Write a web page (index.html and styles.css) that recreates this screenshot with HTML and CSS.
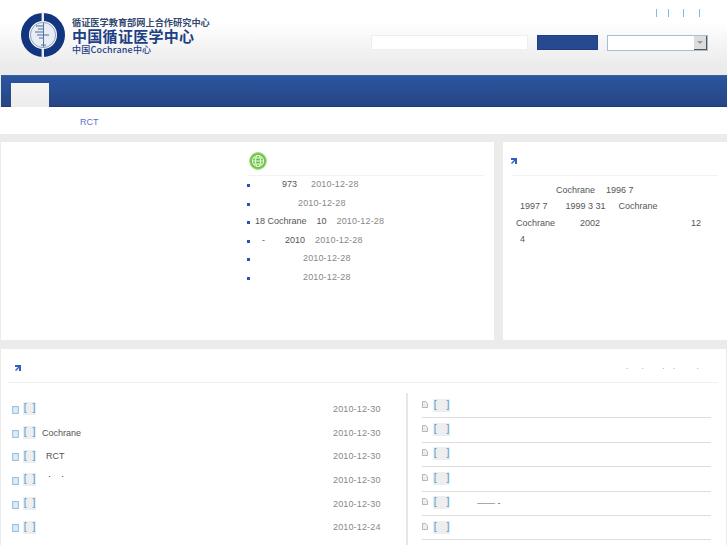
FILE: index.html
```html
<!DOCTYPE html>
<html lang="zh-CN">
<head>
<meta charset="utf-8">
<title>中国循证医学中心</title>
<link rel="stylesheet" href="styles.css">
</head>
<body>
<header class="top">
  <div class="brand">
    <svg class="logo" width="46" height="46" viewBox="0 0 46 46" aria-hidden="true">
      <circle cx="23" cy="23" r="18" fill="none" stroke="#12357f" stroke-width="8"/>
      <rect x="21.6" y="0" width="2.4" height="46" fill="#e9eef5"/>
      <circle cx="23" cy="23" r="12.6" fill="#e8edf4" stroke="#8fa3c4" stroke-width="1"/>
      <path d="M23.5 11v24" stroke="#5b739f" stroke-width="1"/>
      <path d="M16 14h7M18 17h5M15 20h8M17 23h12M19 26h4M21 33h5" stroke="#4f6a9b" stroke-width="1"/>
    </svg>
    <div class="brand-text">
      <div class="brand-a">循证医学教育部网上合作研究中心</div>
      <div class="brand-b">中国循证医学中心</div>
      <div class="brand-c">中国Cochrane中心</div>
    </div>
  </div>
  <div class="tools">
    <div class="links"><i class="sep"></i><i class="sep s2"></i><i class="sep s3"></i><i class="sep s4"></i></div>
    <div class="search">
      <div class="search-input"></div>
      <div class="search-btn"></div>
      <div class="select"><span class="select-arrow"></span></div>
    </div>
  </div>
</header>

<nav class="nav"><div class="tab"></div></nav>
<div class="subnav"><a class="subnav-link">RCT</a></div>

<main>
  <div class="cols">
    <section class="panel news-panel">
      <div class="news-head">
        <svg width="18" height="18" viewBox="0 0 18 18" aria-hidden="true">
          <circle cx="9" cy="9" r="8.4" fill="#6cc644" stroke="#a6dc8a" stroke-width="1"/>
          <circle cx="9" cy="9" r="5.6" fill="none" stroke="#eaf8e0" stroke-width="1"/>
          <ellipse cx="9" cy="9" rx="2.6" ry="5.6" fill="none" stroke="#eaf8e0" stroke-width="1"/>
          <path d="M3.4 9h11.2M4.4 6h9.2M4.4 12h9.2" stroke="#eaf8e0" stroke-width="1"/>
        </svg>
      </div>
      <ul class="news">
        <li><span class="m27">973</span><span class="date m14">2010-12-28</span></li>
        <li><span class="date m43">2010-12-28</span></li>
        <li><span>18 Cochrane</span><span class="m10">10</span><span class="date m10">2010-12-28</span></li>
        <li><span class="m7">-</span><span class="m20">2010</span><span class="date m10">2010-12-28</span></li>
        <li><span class="date m48">2010-12-28</span></li>
        <li><span class="date m48">2010-12-28</span></li>
      </ul>
    </section>
    <section class="panel intro-panel">
      <div class="panel-head"><svg class="arrow" width="6" height="6" viewBox="0 0 6 6" aria-hidden="true"><path d="M0 0h6v6H4V3L1 6 0 5l3-3H0z" fill="#2f5fc0"/></svg></div>
      <div class="intro">
        <p class="l1">Cochrane<span class="m11">1996 7</span></p>
        <p class="l2">1997 7<span class="m18">1999 3 31</span><span class="m13">Cochrane</span></p>
        <p class="l3">Cochrane<span class="m25">2002</span><span class="m91">12</span></p>
        <p class="l4">4</p>
      </div>
    </section>
  </div>

  <section class="panel bottom">
    <div class="bottom-head">
      <svg class="arrow" width="6" height="6" viewBox="0 0 6 6" aria-hidden="true"><path d="M0 0h6v6H4V3L1 6 0 5l3-3H0z" fill="#2f5fc0"/></svg>
      <div class="dots"><b>·</b><b class="g15">·</b><b class="g20">·</b><b class="g12">·</b><b class="g24">·</b></div>
    </div>
    <div class="bottom-cols">
      <ul class="recent">
        <li><svg class="doc-blue" viewBox="0 0 6 7"><rect x=".5" y=".5" width="5" height="6" fill="#dcecf8" stroke="#9dc3e2"/></svg><span class="tag">[ ]</span><span class="name"></span><span class="date">2010-12-30</span></li>
        <li><svg class="doc-blue" viewBox="0 0 6 7"><rect x=".5" y=".5" width="5" height="6" fill="#dcecf8" stroke="#9dc3e2"/></svg><span class="tag">[ ]</span><span class="name n1">Cochrane</span><span class="date">2010-12-30</span></li>
        <li><svg class="doc-blue" viewBox="0 0 6 7"><rect x=".5" y=".5" width="5" height="6" fill="#dcecf8" stroke="#9dc3e2"/></svg><span class="tag">[ ]</span><span class="name n2">RCT</span><span class="date">2010-12-30</span></li>
        <li><svg class="doc-blue" viewBox="0 0 6 7"><rect x=".5" y=".5" width="5" height="6" fill="#dcecf8" stroke="#9dc3e2"/></svg><span class="tag">[ ]</span><span class="name n3">·&nbsp;&nbsp;&nbsp;&nbsp;·</span><span class="date">2010-12-30</span></li>
        <li><svg class="doc-blue" viewBox="0 0 6 7"><rect x=".5" y=".5" width="5" height="6" fill="#dcecf8" stroke="#9dc3e2"/></svg><span class="tag">[ ]</span><span class="name"></span><span class="date">2010-12-30</span></li>
        <li><svg class="doc-blue" viewBox="0 0 6 7"><rect x=".5" y=".5" width="5" height="6" fill="#dcecf8" stroke="#9dc3e2"/></svg><span class="tag">[ ]</span><span class="name"></span><span class="date">2010-12-24</span></li>
      </ul>
      <ul class="files">
        <li><svg class="doc-grey" viewBox="0 0 6 7"><path d="M.5.5h3l2 2v4h-5z" fill="#eee" stroke="#b5b5b5"/></svg><span class="tag wide">[ ]</span></li>
        <li><svg class="doc-grey" viewBox="0 0 6 7"><path d="M.5.5h3l2 2v4h-5z" fill="#eee" stroke="#b5b5b5"/></svg><span class="tag wide">[ ]</span></li>
        <li><svg class="doc-grey" viewBox="0 0 6 7"><path d="M.5.5h3l2 2v4h-5z" fill="#eee" stroke="#b5b5b5"/></svg><span class="tag wide">[ ]</span></li>
        <li><svg class="doc-grey" viewBox="0 0 6 7"><path d="M.5.5h3l2 2v4h-5z" fill="#eee" stroke="#b5b5b5"/></svg><span class="tag wide">[ ]</span></li>
        <li><svg class="doc-grey" viewBox="0 0 6 7"><path d="M.5.5h3l2 2v4h-5z" fill="#eee" stroke="#b5b5b5"/></svg><span class="tag wide">[ ]</span><span class="dash">—— -</span></li>
        <li><svg class="doc-grey" viewBox="0 0 6 7"><path d="M.5.5h3l2 2v4h-5z" fill="#eee" stroke="#b5b5b5"/></svg><span class="tag wide">[ ]</span></li>
      </ul>
    </div>
  </section>
</main>
</body>
</html>
```
FILE: styles.css
```css
* { box-sizing: border-box; }
html, body { margin: 0; padding: 0; }
body {
  height: 545px;
  overflow: hidden;
  background: #ebebeb;
  font-family: "Liberation Sans", "Noto Sans CJK SC", sans-serif;
  font-size: 9px;
  color: #555;
}
ul { list-style: none; margin: 0; padding: 0; }
p { margin: 0; }

.top {
  height: 75px;
  display: flex;
  justify-content: space-between;
  background: linear-gradient(#fff 0, #fff 22px, #ebebeb 66px);
}
.brand { display: flex; padding: 12px 0 0 20px; gap: 6px; }
.logo { display: block; }
.brand-text { color: #1d3f86; font-weight: 700; font-family: "Noto Sans CJK SC", sans-serif; }
.brand-a { font-size: 9.2px; line-height: 10px; margin-top: 5px; color: #33496f; }
.brand-b { font-size: 15px; line-height: 18px; letter-spacing: .3px; margin-top: 0; }
.brand-c { font-size: 9px; line-height: 11px; font-weight: 500; letter-spacing: .2px; margin-top: -1px; }

.tools { width: 356px; padding-top: 9px; }
.links { display: flex; height: 8px; padding-left: 285px; }
.sep { width: 1px; height: 8px; background: #7fbdea; }
.s2 { margin-left: 11px; }
.s3 { margin-left: 14px; }
.s4 { margin-left: 15px; }
.search { display: flex; margin-top: 18px; }
.search-input { width: 157px; height: 15px; background: #fff; border: 1px solid #eee; }
.search-btn { width: 61px; height: 15px; margin-left: 9px; background: #27498f; border: 1px solid #1f3f82; }
.select {
  width: 101px; height: 16px; margin-left: 9px;
  background: #fff; border: 1px solid #a9bdd8;
  display: flex; justify-content: flex-end;
}
.select-arrow {
  width: 13px; height: 14px;
  background: #dcdcdc;
  border-right: 1px solid #555; border-bottom: 1px solid #555;
  display: flex; align-items: center; justify-content: center;
}
.select-arrow::before {
  content: ""; width: 0; height: 0;
  border-left: 3px solid transparent; border-right: 3px solid transparent;
  border-top: 3px solid #999;
}

.nav {
  height: 32px;
  margin-left: 1px;
  padding: 7px 0 0 10px;
  background: linear-gradient(#2b559f, #264584);
  border-top: 1px solid #3d5f9f;
  border-bottom: 1px solid #1e3a78;
}
.tab { width: 38px; height: 24px; background: linear-gradient(#f4f4f4, #ececec); }

.subnav {
  height: 27px;
  background: #fff;
  padding: 10px 0 0 80px;
  line-height: 11px;
  font-size: 9px;
  color: #5a72c4;
}

main { display: block; }
.cols { display: flex; margin: 8px 0 0 1px; gap: 9px; }
.panel { background: #fff; }
.news-panel { width: 493px; height: 198px; padding: 10px 10px 0 246px; }
.news-head { height: 24px; padding: 0 0 0 2px; border-bottom: 1px solid #f2f2f2; }
.news-head svg { display: block; }
.news { margin-top: -1px; }
.news li { height: 18.5px; display: flex; align-items: center; padding-left: 8px; position: relative; color: #555; }
.news li::before {
  content: ""; position: absolute; left: 0; top: 9px;
  width: 3px; height: 3px; background: #2c50b8;
}
.date { color: #888; letter-spacing: .15px; }
.m7 { margin-left: 7px; }
.m10 { margin-left: 10px; }
.m11 { margin-left: 11px; }
.m13 { margin-left: 13px; }
.m14 { margin-left: 14px; }
.m18 { margin-left: 18px; }
.m20 { margin-left: 20px; }
.m25 { margin-left: 25px; }
.m27 { margin-left: 27px; }
.m43 { margin-left: 43px; }
.m48 { margin-left: 48px; }
.m91 { margin-left: 91px; }

.intro-panel { width: 224px; height: 198px; padding: 0 9px; }
.panel-head { height: 34px; padding-top: 16px; border-bottom: 1px solid #f2f2f2; }
.arrow { display: block; }
.panel-head .arrow { margin-left: -1px; }
.intro { padding-top: 6px; line-height: 16.4px; color: #555; }
.l1 { padding-left: 44px; }
.l2 { padding-left: 8px; }
.l3 { padding-left: 4px; }
.l4 { padding-left: 8px; }

.bottom { margin: 9px 0 0 1px; width: 725px; height: 200px; }
.bottom-head {
  height: 34px; margin: 0 8px 0 7px; padding: 16px 0 0 7px;
  display: flex; justify-content: space-between;
  border-bottom: 1px solid #f0f0f0;
}
.dots { display: flex; margin-right: 19px; margin-top: 1px; color: #8a8ad0; font-size: 8px; line-height: 6px; }
.dots b { font-weight: 400; }
.g12 { margin-left: 8px; }
.g15 { margin-left: 13px; }
.g20 { margin-left: 18px; }
.g24 { margin-left: 21px; }
.bottom-cols { display: flex; padding-top: 10px; }
.recent { width: 407px; padding: 4px 25px 0 11px; border-right: 2px solid #e6e6e6; height: 160px; }
.recent li { height: 23.7px; display: flex; align-items: center; }
.doc-blue { width: 7px; height: 8px; margin-top: 2px; flex: none; }
.tag { display: block; width: 13px; height: 13px; line-height: 12px; margin-left: 4px; background: #eee; color: #3d9ad8; font-size: 10px; text-align: center; white-space: pre; word-spacing: 3px; }
.name { flex: 1; margin-left: 6px; }
.n2 { padding-left: 4px; }
.n3 { padding-left: 6px; color: #222; margin-top: -7px; }
.recent .date { width: 48px; flex: none; }

.files { width: 289px; margin: 1px 0 0 14px; }
.files li { height: 24.4px; display: flex; align-items: center; border-bottom: 1px solid #ddd; padding: 0 0 1px 0; }
.doc-grey { width: 6px; height: 7px; margin-top: -2px; flex: none; }
.wide { width: 17px; height: 13px; margin-left: 5px; word-spacing: 7px; }
.dash { margin-left: 27px; color: #666; }
```
